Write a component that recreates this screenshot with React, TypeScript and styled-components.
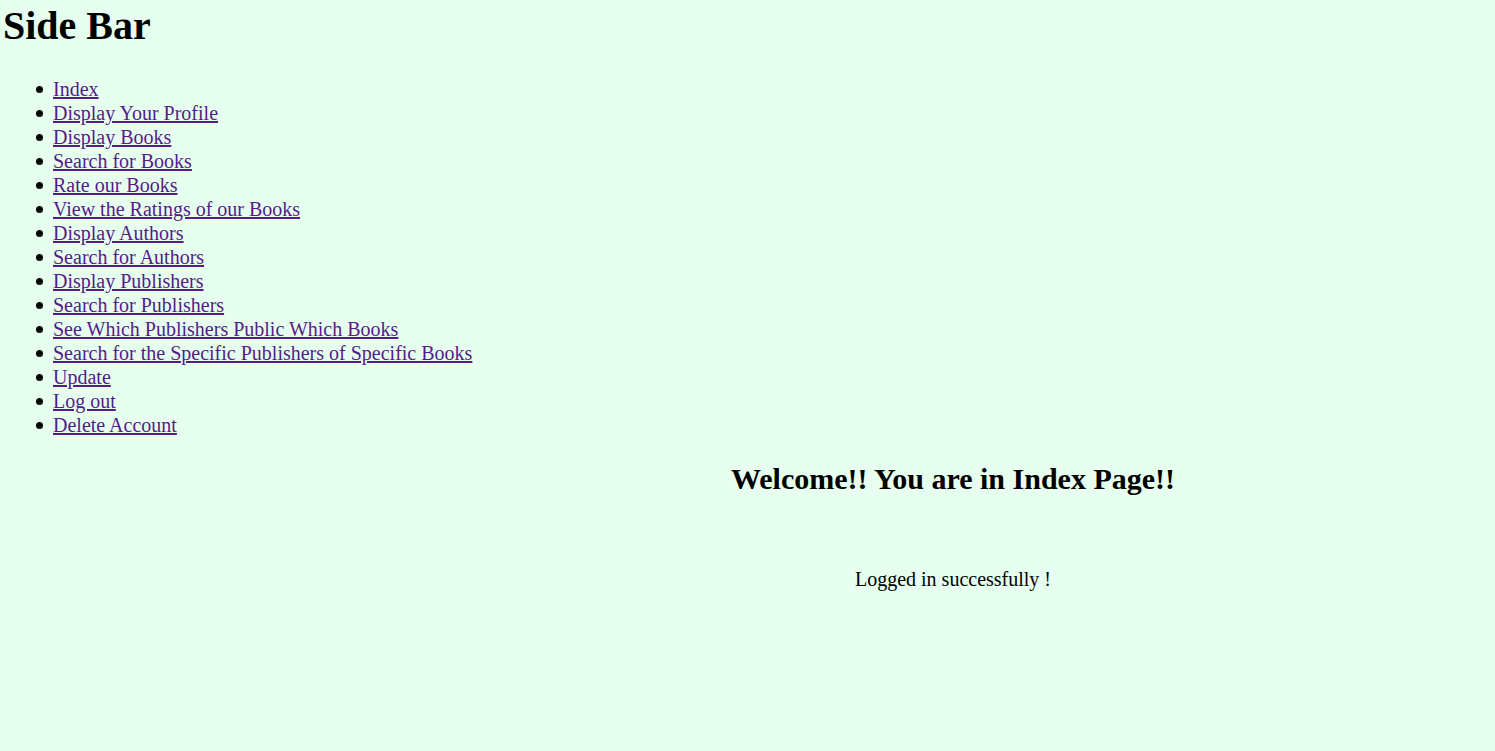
import React from 'react';
import styled, { createGlobalStyle } from 'styled-components';

const GlobalStyle = createGlobalStyle`
  html, body {
    margin: 0;
    padding: 0;
    background: #e6ffee;
  }

  body {
    font-family: "Liberation Serif", "Times New Roman", serif;
    font-size: 20px;
    color: #000;
  }
`;

const Page = styled.div`
  min-height: 751px;
  background: #e6ffee;
`;

const SideBar = styled.nav`
  padding-left: 3px;
`;

const SideBarTitle = styled.h1`
  margin: 3px 0 0;
  font-size: 40px;
  font-weight: bold;
  line-height: 46px;
`;

const NavList = styled.ul`
  margin: 28px 0 0;
  padding-left: 50px;
  list-style: none;
`;

const NavItem = styled.li`
  line-height: 24px;

  &::before {
    content: '';
    display: inline-block;
    width: 7px;
    height: 7px;
    margin-left: -17px;
    margin-right: 10px;
    border-radius: 50%;
    background: #000;
    vertical-align: 3px;
  }
`;

const NavLink = styled.a`
  color: #551a8b;
  text-decoration: underline;
`;

const Main = styled.main`
  margin-left: 411px;
  text-align: center;
`;

const Welcome = styled.h2`
  margin: 25px 0 0;
  font-size: 30px;
  font-weight: bold;
  line-height: 34px;
`;

const Message = styled.p`
  margin: 72px 0 0;
  line-height: 23px;
`;

const links = [
  'Index',
  'Display Your Profile',
  'Display Books',
  'Search for Books',
  'Rate our Books',
  'View the Ratings of our Books',
  'Display Authors',
  'Search for Authors',
  'Display Publishers',
  'Search for Publishers',
  'See Which Publishers Public Which Books',
  'Search for the Specific Publishers of Specific Books',
  'Update',
  'Log out',
  'Delete Account',
];

export default function App() {
  return (
    <Page>
      <GlobalStyle />
      <SideBar>
        <SideBarTitle>Side Bar</SideBarTitle>
        <NavList>
          {links.map((label) => (
            <NavItem key={label}>
              <NavLink href="#">{label}</NavLink>
            </NavItem>
          ))}
        </NavList>
      </SideBar>
      <Main>
        <Welcome>Welcome!! You are in Index Page!!</Welcome>
        <Message>Logged in successfully !</Message>
      </Main>
    </Page>
  );
}
